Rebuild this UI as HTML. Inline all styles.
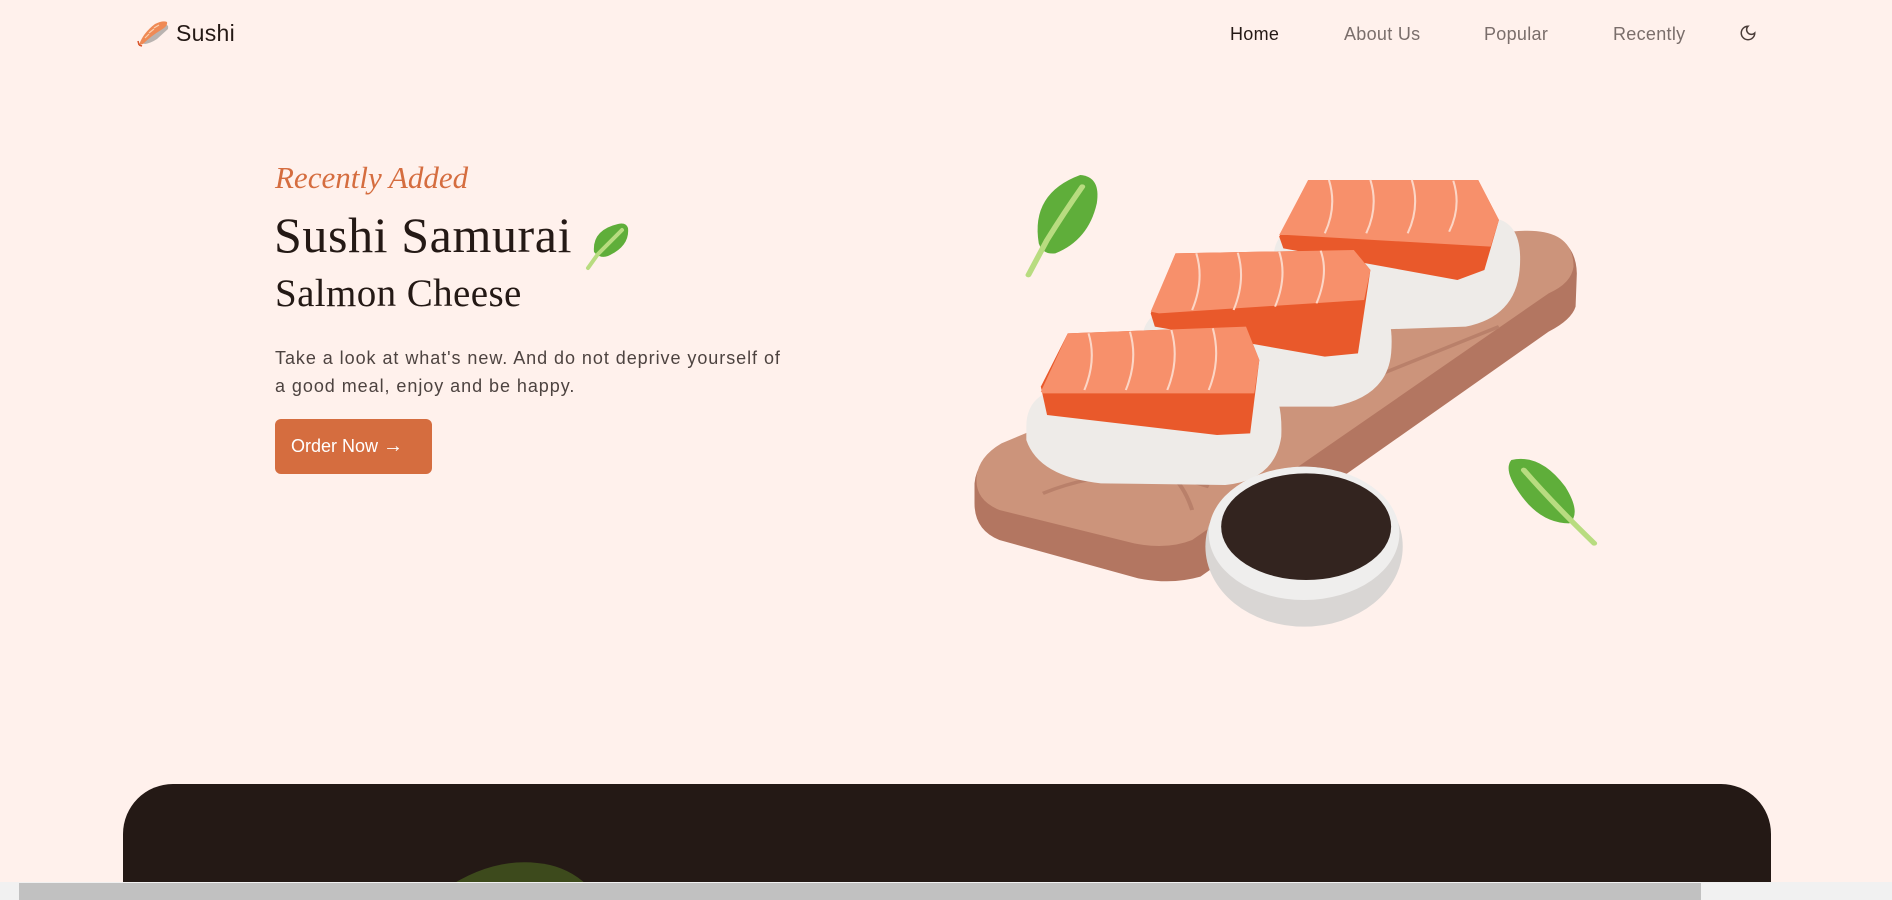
<!DOCTYPE html>
<html><head><meta charset="utf-8">
<style>
*{margin:0;padding:0;box-sizing:border-box}
html,body{width:1892px;height:900px;overflow:hidden;background:#fff1ec;font-family:"Liberation Sans",sans-serif;position:relative}
.abs{position:absolute}
.nav{position:absolute;top:22px;font-size:18px;color:#7a6e6b;white-space:nowrap;line-height:24px;letter-spacing:0.3px}
.h1{font-family:"Liberation Serif",serif;color:#241915;white-space:nowrap}
</style></head><body>
<svg class="abs" style="left:137px;top:19px" width="34" height="28" viewBox="0 0 34 28">
<path d="M4 24 L14 11 Q20 6 28 5 Q32 6 31 10 L20 20 Q14 24 8 25 Z" fill="#b9b3b0"/>
<path d="M2 26 Q6 14 18 5 Q26 1 30 3 Q31 7 24 11 Q14 17 6 25 Z" fill="#ef8a55"/>
<path d="M8 19 L12 15 M12 14 L17 10 M17 9 L22 6" stroke="#fbd0b0" stroke-width="1.2"/>
<path d="M2 26 L1 22 M2 26 L5 27" stroke="#d9562d" stroke-width="1.5"/>
</svg>
<div class="abs" style="left:176px;top:18px;font-size:23px;color:#241915;line-height:30px;letter-spacing:0.3px">Sushi</div>
<div class="nav" style="left:1230px;color:#241915">Home</div>
<div class="nav" style="left:1344px">About Us</div>
<div class="nav" style="left:1484px">Popular</div>
<div class="nav" style="left:1613px">Recently</div>
<svg class="abs" style="left:1739px;top:24px" width="18" height="18" viewBox="0 0 24 24"><path d="M12 3a6 6 0 0 0 9 9 9 9 0 1 1-9-9Z" fill="none" stroke="#4a3d39" stroke-width="2"/></svg>

<div class="abs" style="left:275px;top:158px;font-family:'Liberation Serif',serif;font-style:italic;font-size:31px;color:#d56d3f;line-height:40px">Recently Added</div>
<div class="abs h1" style="left:274px;top:205px;font-size:50px;line-height:60px;letter-spacing:0.6px">Sushi Samurai</div>
<svg class="abs" style="left:584px;top:222px" width="52" height="50" viewBox="0 0 52 50"><path d="M10 30 Q8 8 34 2 Q42 0 44 6 Q46 24 24 34 Q16 37 10 30Z" fill="#5fae3a"/><path d="M4 46 L14 32 Q26 20 38 8" stroke="#b8dc80" stroke-width="4" fill="none" stroke-linecap="round"/></svg>
<div class="abs h1" style="left:275px;top:270px;font-size:39px;line-height:48px;letter-spacing:0.4px">Salmon Cheese</div>
<div class="abs" style="left:275px;top:344px;font-size:18px;line-height:28px;color:#4d4340;width:600px;letter-spacing:0.95px;white-space:nowrap">Take a look at what's new. And do not deprive yourself of<br>a good meal, enjoy and be happy.</div>
<div class="abs" style="left:275px;top:419px;width:157px;height:55px;background:#d56d3f;border-radius:6px;color:#fff;font-size:18px;line-height:55px;padding-left:16px">Order Now <span style="font-size:20px">&#8594;</span></div>

<svg class="abs" style="left:960px;top:160px" width="650" height="480" viewBox="0 0 1568 1440" preserveAspectRatio="none">
<path d="M100 860 L1340 225 Q1485 200 1488 340 L1485 440 Q1475 480 1420 515 L580 1250 Q510 1275 430 1255 L95 1140 Q35 1110 35 1030 L35 970 Q40 900 100 860Z" fill="#b37661"/>
<path d="M100 850 L1330 215 Q1480 195 1480 320 Q1475 370 1420 400 L560 1140 Q500 1170 420 1150 L95 1050 Q35 1020 40 950 Q45 890 100 850Z" fill="#cc947b"/>
<path d="M200 1000 Q400 900 600 980 M900 700 Q1100 600 1300 500 M250 920 Q500 820 560 1050" stroke="#b9806a" stroke-width="10" fill="none"/>
<path d="M760 320 Q740 200 860 190 L1290 175 Q1360 190 1350 330 Q1340 470 1220 500 L980 510 Q840 500 780 430Z" fill="#eeebe8"/>
<path d="M440 560 Q430 440 560 430 L980 410 Q1050 430 1040 580 Q1030 710 900 740 L640 740 Q500 730 450 650Z" fill="#eeebe8"/>
<path d="M160 800 Q160 680 290 680 L720 650 Q780 680 775 830 Q760 960 640 975 L340 970 Q190 950 160 840Z" fill="#eeebe8"/>
<path d="M770 230 L840 60 L1250 60 L1300 180 L1265 330 L1200 360 L780 265Z" fill="#e9592b"/>
<path d="M770 225 L840 60 L1250 60 L1300 180 L1280 260 L790 225Z" fill="#f7906b"/>
<path d="M460 460 L520 280 L950 270 L990 330 L960 580 L880 590 L470 500Z" fill="#e9592b"/>
<path d="M460 455 L520 280 L950 270 L990 330 L975 420 L480 460Z" fill="#f7906b"/>
<path d="M195 680 L260 520 L690 500 L722 600 L700 820 L620 825 L210 765Z" fill="#e9592b"/>
<path d="M195 695 L260 520 L690 500 L722 600 L710 700 L200 700Z" fill="#f7906b"/>
<g stroke="#fcd6c6" stroke-width="5" fill="none">
<path d="M300 690 Q330 600 310 520 M400 690 Q430 600 410 515 M500 690 Q530 600 510 510 M600 690 Q630 600 610 505"/>
<path d="M560 450 Q590 360 570 280 M660 450 Q690 360 670 278 M760 440 Q790 350 770 275 M860 430 Q890 340 870 272"/>
<path d="M880 220 Q910 140 890 60 M980 220 Q1010 140 990 60 M1080 220 Q1110 140 1090 60 M1180 215 Q1210 140 1190 62"/>
</g>
<ellipse cx="830" cy="1160" rx="238" ry="240" fill="#d9d6d4"/>
<ellipse cx="830" cy="1120" rx="230" ry="200" fill="#efeeed"/>
<ellipse cx="835" cy="1100" rx="205" ry="160" fill="#33241f"/>
<path d="M190 250 Q170 100 290 45 Q340 50 330 130 Q310 240 230 280 Q200 285 190 250Z" fill="#5fae3a"/>
<path d="M165 345 L210 240 Q250 160 295 80" stroke="#b8dc80" stroke-width="14" fill="none" stroke-linecap="round"/>
<path d="M1330 900 Q1400 880 1460 980 Q1500 1060 1470 1090 Q1400 1090 1350 1000 Q1310 930 1330 900Z" fill="#5fae3a"/>
<path d="M1360 930 Q1430 1030 1530 1150" stroke="#b8dc80" stroke-width="14" fill="none" stroke-linecap="round"/>
</svg>

<div class="abs" style="left:123px;top:784px;width:1648px;height:116px;background:#241915;border-radius:50px 50px 0 0;overflow:hidden">
<svg class="abs" style="left:307px;top:76px" width="200" height="40" viewBox="0 0 200 40"><path d="M0 40 Q60 -8 120 5 Q150 12 170 40Z" fill="#3d4a1c"/></svg>
</div>
<div class="abs" style="left:0;top:882px;width:1892px;height:18px;background:#f1f1f1"></div>
<div class="abs" style="left:19px;top:883px;width:1682px;height:17px;background:#c1c1c1"></div>
</body></html>
